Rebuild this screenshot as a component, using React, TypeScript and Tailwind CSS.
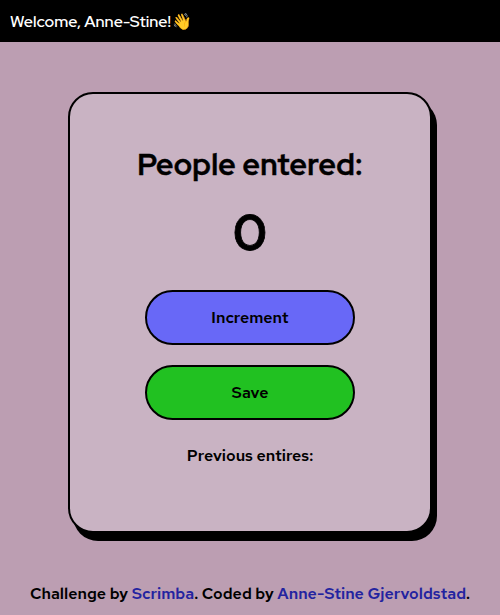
import { useState } from "react";

export default function App() {
  const [count, setCount] = useState(0);
  const [entries, setEntries] = useState<number[]>([]);

  const save = () => {
    setEntries([...entries, count]);
    setCount(0);
  };

  return (
    <div className="flex h-[615px] w-full flex-col overflow-hidden bg-[#bc9eb2] font-['Red_Hat_Text','Inter',sans-serif] text-base font-semibold text-black">
      <header className="flex h-[42px] shrink-0 items-center bg-black px-2.5 pt-px font-['Red_Hat_Display','Inter',sans-serif] font-semibold text-white">
        Welcome, Anne-Stine!<span className="ml-px">👋</span>
      </header>
      <main className="mx-auto mt-[50px] flex h-[441px] w-[364px] shrink-0 flex-col items-center rounded-[25px] border-2 border-black bg-[#c9b3c3] shadow-[5px_8px_0_#000]">
        <h1 className="mt-[49px] font-['Red_Hat_Display','Inter',sans-serif] text-[30px] leading-[42px] font-bold tracking-[0.3px] whitespace-nowrap [-webkit-text-stroke:0.4px_black]">People entered:</h1>
        <h2 className="mt-[14px] font-['Red_Hat_Display','Inter',sans-serif] text-[50px] leading-[66px] font-bold [-webkit-text-stroke:0.8px_black]">{count}</h2>
        <button onClick={() => setCount(count + 1)} className="mt-[25px] h-[55px] w-[210px] shrink-0 rounded-full border-2 border-black bg-[#6868f7]">
          Increment
        </button>
        <button onClick={save} className="mt-5 h-[55px] w-[210px] shrink-0 rounded-full border-2 border-black bg-[#21c121]">
          Save
        </button>
        <p className="mt-[25px] leading-[21px] whitespace-nowrap">Previous entires: {entries.join(" - ")}</p>
      </main>
      <footer className="mt-[50px] text-center leading-[21px] whitespace-nowrap">
        Challenge by <a className="text-[#2323a0]">Scrimba</a>. Coded by <a className="text-[#2323a0]">Anne-Stine Gjervoldstad</a>.
      </footer>
    </div>
  );
}
